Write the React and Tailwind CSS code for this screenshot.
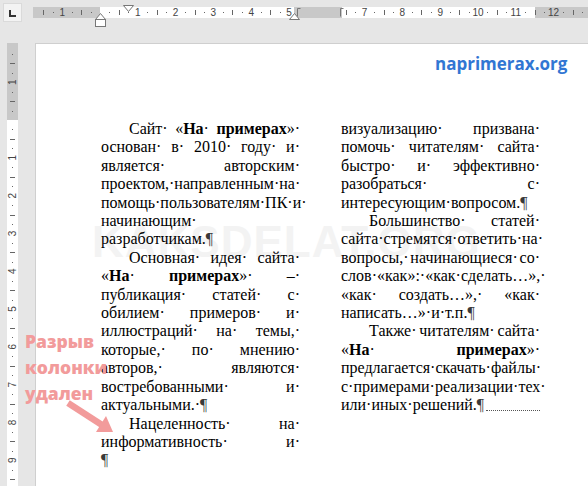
import React from "react";

const CM = 37.8;

function TopRuler() {
  const ticks = [];
  for (let k = -7; k <= 52; k++) {
    const x = 100 + (k * CM) / 4;
    if (x < 34 || x > 587) continue;
    if (x > 294 && x < 341) continue;
    if (k === 0) continue;
    const m = ((k % 4) + 4) % 4;
    if (m === 0)
      ticks.push(
        <text key={k} x={x} y={16} fontSize="10" textAnchor="middle" fill="#444" fontFamily="Liberation Sans, Arial, sans-serif">
          {Math.abs(k / 4)}
        </text>
      );
    else if (m === 2) {
      const xx = Math.round(x) + 0.5;
      ticks.push(<line key={k} x1={xx} x2={xx} y1={10} y2={15} stroke="#666" strokeWidth="1" />);
    } else ticks.push(<rect key={k} x={Math.round(x)} y={12} width="1" height="1" fill="#666" />);
  }
  return (
    <svg width="555" height="43" viewBox="33 0 555 43" className="block">
      <rect x="33" y="7" width="67" height="11" fill="#c8c8c8" />
      <rect x="100" y="7" width="194" height="11" fill="#ffffff" />
      <rect x="294" y="7" width="48" height="11" fill="#c8c8c8" />
      <rect x="342" y="7" width="193" height="11" fill="#ffffff" />
      <rect x="535" y="7" width="53" height="11" fill="#c8c8c8" />
      {ticks}
      <polygon points="123.5,5.5 133.5,5.5 128.5,11.5" fill="#fff" stroke="#777" strokeWidth="1" />
      <polygon points="95.5,19.5 105.5,19.5 100.5,13.5" fill="#fff" stroke="#777" strokeWidth="1" />
      <rect x="95.5" y="19.5" width="10" height="7" fill="#fff" stroke="#777" strokeWidth="1" />
      <polygon points="289.5,19.5 299.5,19.5 294.5,13.5" fill="#fff" stroke="#777" strokeWidth="1" />
      <path d="M297.5 16.5 V8.5 H300.5" fill="none" stroke="#777" strokeWidth="1" />
      <path d="M340.5 16.5 V8.5 H343.5" fill="none" stroke="#777" strokeWidth="1" />
    </svg>
  );
}

function SideRuler() {
  const ticks = [];
  for (let k = -7; k <= 40; k++) {
    const y = 120 + (k * CM) / 4;
    if (y < 45 || y > 486) continue;
    if (k === 0) continue;
    const m = ((k % 4) + 4) % 4;
    if (m === 0)
      ticks.push(
        <text
          key={k}
          x={12.5}
          y={y + 3.5}
          transform={`rotate(-90 12.5 ${y})`}
          fontSize="10"
          textAnchor="middle"
          fill="#444"
          fontFamily="Liberation Sans, Arial, sans-serif"
        >
          {Math.abs(k / 4)}
        </text>
      );
    else if (m === 2) {
      const yy = Math.round(y) + 0.5;
      ticks.push(<line key={k} x1={10} x2={15} y1={yy} y2={yy} stroke="#666" strokeWidth="1" />);
    } else ticks.push(<rect key={k} x={12} y={Math.round(y)} width="1" height="1" fill="#666" />);
  }
  return (
    <svg width="35" height="443" viewBox="0 43 35 443" className="block">
      <rect x="7" y="43" width="11" height="77" fill="#c8c8c8" />
      <rect x="7" y="120" width="11" height="366" fill="#ffffff" />
      {ticks}
    </svg>
  );
}

function Word({ w }) {
  const parts = w.split(/(\{[^}]*\})/).filter(Boolean);
  return parts.map((p, i) =>
    p.startsWith("{") ? (
      <b key={i} className="font-bold">
        {p.slice(1, -1)}
      </b>
    ) : (
      <span key={i}>{p}</span>
    )
  );
}

const Pil = () => <span className="text-[#3a3a3a]">¶</span>;

function JLine({ words, indent }) {
  return (
    <div className={`flex justify-between whitespace-pre ${indent ? "pl-[28px]" : ""}`}>
      {words.map((w, i) => (
        <span key={i}>
          <Word w={w} />·
        </span>
      ))}
    </div>
  );
}

function LLine({ words, indent, tail }) {
  return (
    <div className={`flex whitespace-pre ${indent ? "pl-[28px]" : ""}`}>
      <span>
        {words.map((w, i) => (
          <span key={i}>
            <Word w={w} />
            {i < words.length - 1 ? "·" : ""}
          </span>
        ))}
        <Pil />
      </span>
      {tail}
    </div>
  );
}

export default function App() {
  return (
    <div className="w-[588px] h-[486px] bg-[#e6e6e6] flex flex-col overflow-hidden relative font-['Liberation_Serif','Times_New_Roman',serif]">
      <div className="h-[43px] flex shrink-0">
        <div className="w-[33px] pl-[3px] pt-[3px]">
          <div className="w-[19px] h-[19px] bg-[#f3f3f3] border border-[#dadada] flex items-center justify-center">
            <svg width="8" height="8" viewBox="0 0 8 8">
              <path d="M1 1 V7 H7" fill="none" stroke="#333" strokeWidth="2" />
            </svg>
          </div>
        </div>
        <TopRuler />
      </div>
      <div className="flex flex-1">
        <div className="w-[35px] shrink-0">
          <SideRuler />
        </div>
        <div className="flex-1 bg-white border-l border-t border-[#cfcfcf] relative">
          <div className="absolute left-[56px] top-[176px] text-[44px] leading-none font-bold text-[#f3f3f3] font-['Liberation_Sans',Arial,sans-serif] tracking-[1px] whitespace-nowrap">
            KAKSDELAT.ORG
          </div>
          <div className="absolute left-[399px] top-[9px] text-[17px] leading-[22px] font-bold text-[#3176d3] font-['Open_Sans',sans-serif]">
            naprimerax.org
          </div>
          <div className="relative flex gap-[41px] pl-[65px] pt-[76px] text-[16px] leading-[18.4px] text-black">
            <div className="w-[199px]">
              <JLine indent words={["Сайт", "«{На}", "{примерах}»"]} />
              <JLine words={["основан", "в", "2010", "году", "и"]} />
              <JLine words={["является", "авторским"]} />
              <JLine words={["проектом,", "направленным", "на"]} />
              <JLine words={["помощь", "пользователям", "ПК", "и"]} />
              <JLine words={["начинающим"]} />
              <LLine words={["разработчикам."]} />
              <JLine indent words={["Основная", "идея", "сайта"]} />
              <JLine words={["«{На}", "{примерах}»", "–"]} />
              <JLine words={["публикация", "статей", "с"]} />
              <JLine words={["обилием", "примеров", "и"]} />
              <JLine words={["иллюстраций", "на", "темы,"]} />
              <JLine words={["которые,", "по", "мнению"]} />
              <JLine words={["авторов,", "являются"]} />
              <JLine words={["востребованными", "и"]} />
              <LLine words={["актуальными.", ""]} />
              <JLine indent words={["Нацеленность", "на"]} />
              <JLine words={["информативность", "и"]} />
              <LLine words={[""]} />
            </div>
            <div className="w-[199px]">
              <JLine words={["визуализацию", "призвана"]} />
              <JLine words={["помочь", "читателям", "сайта"]} />
              <JLine words={["быстро", "и", "эффективно"]} />
              <JLine words={["разобраться", "с"]} />
              <LLine words={["интересующим", "вопросом."]} />
              <JLine indent words={["Большинство", "статей"]} />
              <JLine words={["сайта", "стремятся", "ответить", "на"]} />
              <JLine words={["вопросы,", "начинающиеся", "со"]} />
              <JLine words={["слов", "«как»:", "«как", "сделать…»,"]} />
              <JLine words={["«как", "создать…»,", "«как"]} />
              <LLine words={["написать…»", "и", "т.п."]} />
              <JLine indent words={["Также", "читателям", "сайта"]} />
              <JLine words={["«{На}", "{примерах}»"]} />
              <JLine words={["предлагается", "скачать", "файлы"]} />
              <JLine words={["с", "примерами", "реализации", "тех"]} />
              <LLine
                words={["или", "иных", "решений."]}
                tail={<span className="flex-1 self-end mb-[4px] ml-[2px] border-b border-dotted border-[#555]" />}
              />
            </div>
          </div>
        </div>
      </div>
      <div className="absolute left-[25px] top-[328px] text-[17.5px] leading-[26px] font-extrabold text-[#f29b9b] font-['Open_Sans',sans-serif]">
        <div>Разрыв</div>
        <div>колонки</div>
        <div>удален</div>
      </div>
      <svg className="absolute left-[60px] top-[395px]" width="60" height="45" viewBox="60 395 60 45">
        <line x1="68" y1="403" x2="102" y2="425" stroke="#f29b9b" strokeWidth="6.5" />
        <polygon points="113,432 96,432 106,416" fill="#f29b9b" />
      </svg>
    </div>
  );
}
